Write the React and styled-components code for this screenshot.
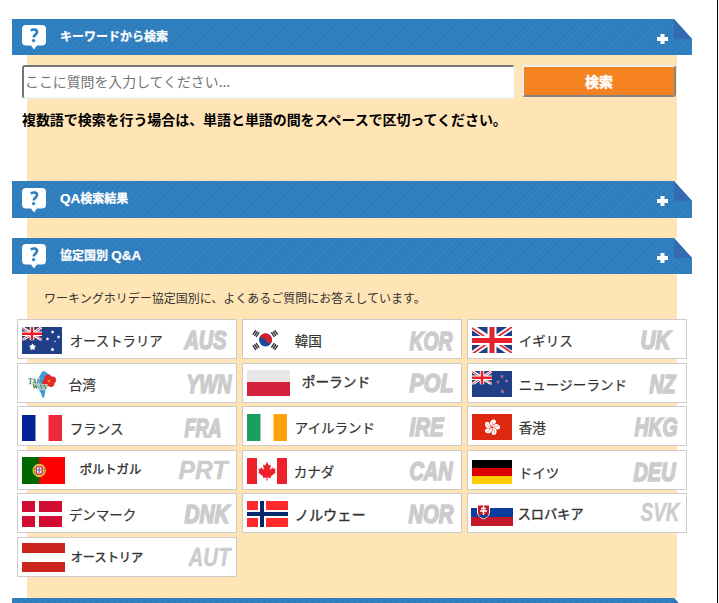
import React from "react";
import styled, { createGlobalStyle } from "styled-components";

const GlobalStyle = createGlobalStyle`
  * { box-sizing: border-box; }
  body {
    margin: 0;
    background: #fff;
    font-family: "Liberation Sans", "Noto Sans CJK JP", sans-serif;
  }
`;

const Page = styled.div`
  width: 718px;
  height: 603px;
  overflow: hidden;
  padding: 19px 0 0 27px;
  border-right: 1px solid #000;
`;

const Panel = styled.main`
  width: 650px;
  background: #ffe4b5;
`;

const Bar = styled.header`
  display: flex;
  align-items: flex-start;
  width: 680px;
  height: ${(p) => p.$height || 36}px;
  margin-left: -15px;
  padding-left: 10px;
  background: repeating-linear-gradient(135deg, #3180c0 0 2.6px, #2b77b7 3.4px, #3180c0 4.24px);
`;

const Bubble = styled.svg`
  flex: none;
  width: 24px;
  height: 25px;
  margin-top: ${(p) => p.$top || 6}px;
`;

const BarTitle = styled.h2`
  flex: 1;
  margin: 8px 0 0 14px;
  color: #fff;
  font-size: 12px;
  line-height: 20px;
  font-weight: 700;
  -webkit-text-stroke: 0.25px #fff;
  white-space: nowrap;
`;

const Latin = styled.span`
  font-size: 13.5px;
  line-height: 1;
`;

const Plus = styled.svg`
  flex: none;
  width: 11px;
  height: 10px;
  margin: 15px 6px 0 0;
`;

const Fold = styled.svg`
  flex: none;
  width: 18px;
  height: 20px;
`;

const SearchSection = styled.section`
  height: 126px;
  margin-left: -5px;
  padding-top: 10px;
`;

const SearchForm = styled.form`
  display: flex;
  align-items: flex-start;
  gap: 7px;
`;

const SearchInput = styled.input`
  width: 493px;
  height: 34px;
  margin: 0;
  padding: 0 0 2px 1px;
  border: 2px solid;
  border-color: #767676 #f0f0f0 #f0f0f0 #767676;
  border-radius: 3px;
  background: #fff;
  font: 13.9px "Noto Sans CJK JP", sans-serif;
  &::placeholder { color: #757575; opacity: 1; }
`;

const SearchButton = styled.button`
  width: 154px;
  height: 32px;
  padding: 0;
  border: 2px solid;
  border-color: #efefef #858585 #858585 #efefef;
  border-radius: 3px;
  background: #f58220;
  color: #fff;
  font: 700 14px/26px "Noto Sans CJK JP", sans-serif;
  -webkit-text-stroke: 0.4px #fff;
`;

const Notice = styled.p`
  margin: 10px 0 0;
  color: #000;
  font-size: 14px;
  line-height: 22px;
  font-weight: 700;
  letter-spacing: -0.07px;
  white-space: nowrap;
`;

const Gap = styled.div`
  height: 20px;
`;

const Countries = styled.section`
  height: 324px;
  padding-top: 15px;
`;

const Intro = styled.p`
  margin: 0 0 10px 17px;
  color: #333;
  font-size: 12px;
  line-height: 20px;
  white-space: nowrap;
`;

const CountryGrid = styled.div`
  display: grid;
  grid-template-columns: repeat(3, 220px);
  grid-auto-rows: 40px;
  gap: 3.6px 5px;
  width: 670px;
  margin-left: -10px;
`;

const Card = styled.a`
  display: flex;
  align-items: flex-start;
  border: 1px solid #ccc;
  background: #fff;
  color: #333;
`;

const Flag = styled.svg`
  flex: none;
  width: ${(p) => p.$w}px;
  height: ${(p) => p.$h}px;
  margin: ${(p) => p.$y}px 0 0 ${(p) => p.$x}px;
`;

const Name = styled.span`
  flex: none;
  margin: ${(p) => p.$y - 1}px 0 0 ${(p) => p.$x + 0.7}px;
  font-family: "Noto Sans CJK JP", sans-serif;
  font-size: ${(p) => p.$size}px;
  font-weight: 400;
  -webkit-text-stroke: ${(p) => (p.$strong ? 0.4 : 0.2)}px #333;
  line-height: 20px;
  white-space: nowrap;
`;

const CodeArt = styled.svg`
  flex: none;
  overflow: visible;
  height: 20px;
  width: ${(p) => p.$w}px;
  margin: ${(p) => p.$y}px ${(p) => p.$right}px 0 auto;
  text {
    font: italic 700 26.5px "Liberation Sans", sans-serif;
    fill: #ccc;
    stroke: #ccc;
    stroke-width: ${(p) => (p.$light ? 0.4 : 1.7)}px;
  }
`;

function UnionJack() {
  return (
    <>
      <path fill="#1f3f87" d="M0 0h40v27H0z" />
      <path stroke="#fff" strokeWidth="5.4" d="M0 0l40 27M40 0L0 27" />
      <path stroke="#e22a35" strokeWidth="1.8" d="M0 1l19 13M40 26L21 13M40 0L21 13M0 27l19-13" />
      <path stroke="#fff" strokeWidth="9" d="M20 0v27M0 13.5h40" />
      <path stroke="#e8202c" strokeWidth="5" d="M20 0v27M0 13.5h40" />
    </>
  );
}

function Canton() {
  return (
    <svg width="20" height="13.5" viewBox="0 0 40 27">
      <UnionJack />
    </svg>
  );
}

function starPoints(cx, cy, r, inner = 0.42, n = 5) {
  return Array.from({ length: n * 2 }, (_, i) => {
    const a = (Math.PI * i) / n - Math.PI / 2;
    const q = i % 2 ? r * inner : r;
    return `${cx + q * Math.cos(a)},${cy + q * Math.sin(a)}`;
  }).join(" ");
}

const Star = ({ x, y, r, inner, ...rest }) => <polygon points={starPoints(x, y, r, inner)} {...rest} />;

const bars = (ys) =>
  ys.map(([x, y, a]) => (
    <g key={`${x}-${y}`} transform={`translate(${x} ${y}) rotate(${a})`} stroke="#333" strokeWidth="1.4">
      <path d="M-2.7-2h5.4M-2.7 0h5.4M-2.7 2h5.4" />
    </g>
  ));

const drawings = {
  AUS: (
    <>
      <path fill="#1f3f87" d="M0 0h40v27H0z" />
      <Canton />
      <g fill="#fff">
        <Star x={10.5} y={20} r={3.6} inner={0.6} />
        <Star x={30.5} y={5} r={1.8} inner={0.6} />
        <Star x={25.5} y={12} r={1.8} inner={0.6} />
        <Star x={36.5} y={10} r={1.8} inner={0.6} />
        <Star x={30.5} y={22.5} r={2} inner={0.6} />
        <circle cx="33" cy="14.5" r=".7" />
      </g>
    </>
  ),
  YWN: (
    <>
      <path fill="#3f9bd8" d="M22 0l6 4-1 5-3 7-1 6-1 5-2-1-1-4-4-6-1-4 3-6 3-5z" />
      <g fill="#e02a2a">
        <circle cx="26" cy="7" r="3.600" />
        <circle cx="30.5" cy="9" r="3.500" />
        <circle cx="29" cy="12.500" r="3.400" />
        <circle cx="24" cy="12" r="3.8" />
      </g>
      <circle cx="27" cy="10" r="1.5" fill="#f58220" />
      <g fill="#176b3a" stroke="#fff" strokeWidth="1" paintOrder="stroke" fontFamily="Liberation Serif, serif" fontWeight="700">
        <text x="6" y="13" fontSize="9" textLength="11" lengthAdjust="spacingAndGlyphs" transform="rotate(4 6 13)">TAI</text>
        <text x="10" y="17.500" fontSize="7.500" textLength="15" lengthAdjust="spacingAndGlyphs" transform="rotate(5 10 18)">WAN</text>
      </g>
    </>
  ),
  FRA: (
    <>
      <path fill="#fff" d="M0 0h40v26H0z" />
      <path fill="#002395" d="M0 0h13.5v26H0z" />
      <path fill="#ed2939" d="M26.5 0H40v26H26.5z" />
    </>
  ),
  KOR: (
    <>
      <circle cx="13.5" cy="10" r="6.5" fill="#174a9c" />
      <path d="M7.4 7.7A6.5 6.5 0 0 1 19.7 12c-1.2 2-4 2-6.2-1.8-2-3-5-3.500-6.100-2.500z" fill="#d5202f" />
      {bars([[4, 3.6, -56], [22.5, 3.6, 56], [4, 16.500, 56], [22.5, 16.500, -56]])}
    </>
  ),
  POL: (
    <>
      <path fill="#e9e8e7" d="M0 0h43v12H0z" />
      <path fill="#d4213d" d="M0 12h43v14H0z" />
    </>
  ),
  IRE: (
    <>
      <path fill="#fff" d="M0 0h40v27H0z" />
      <path fill="#1b9e5f" d="M0 0h13.5v27H0z" />
      <path fill="#ffa20d" d="M26.5 0H40v27H26.5z" />
    </>
  ),
  UK: <UnionJack />,
  NZ: (
    <>
      <path fill="#1f3f87" d="M0 0h40v26H0z" />
      <Canton />
      <g fill="#ee3a47" stroke="#b9a9cc" strokeWidth=".4">
        <Star x={30} y={5.500} r={1.5} />
        <Star x={26} y={11} r={1.5} />
        <Star x={34.500} y={10} r={1.5} />
        <Star x={30.5} y={20.5} r={2} />
      </g>
    </>
  ),
  HKG: (
    <>
      <path fill="#de2910" d="M0 0h40v26H0z" />
      {[0, 72, 144, 216, 288].map((a) => (
        <g key={a} transform={`rotate(${a + 8} 20 13.3)`}>
          <path fill="#fff" d="M20 12.800c-4-2-3-6.500.5-7.500 3-.2 3.500 3 1.500 4.300-1.500 1-2 1.800-2 3.200z" />
          <path stroke="#de2910" strokeWidth=".4" fill="none" d="M20 11c-.8-1.500-.4-3 .5-3.800" />
        </g>
      ))}
    </>
  ),
  PRT: (
    <>
      <path fill="#f00" d="M0 0h43v27H0z" />
      <path fill="#060" d="M0 0h17.2v27H0z" />
      <circle cx="17.2" cy="13.5" r="6.2" fill="#66721a" stroke="#f0d818" strokeWidth="1" />
      <path d="M11 13.500h12.400M13 9l9 9" stroke="#e9d21a" strokeWidth=".7" />
      <path d="M13.200 8.800h8v6.500c0 4.300-8 4.300-8 0z" fill="#e22" stroke="#fff" strokeWidth=".7" />
      <path d="M15 10.500h4.400v4.500c0 2.200-4.400 2.200-4.400 0z" fill="#fff" />
      <path d="M17.200 10.700v5.500M15.300 13h3.800" stroke="#3556b5" strokeWidth="1" />
    </>
  ),
  CAN: (
    <>
      <path fill="#fff" d="M0 0h40v26H0z" />
      <path fill="#ed202b" d="M0 0h10v26H0zM30 0h10v26H30z" />
      <path fill="#ed202b" d="M20 4l1.900 3.500 2-1-.9 5.500 3-2.700.5 1.700 2-.4-.5 3 .7.800-5 4 .4 1.700-3.700-.7.200 3.100h-1.200l.2-3.100-3.700.7.400-1.700-5-4 .7-.8-.5-3 2 .4.500-1.700 3 2.700-.9-5.500 2 1z" />
    </>
  ),
  DEU: (
    <>
      <path d="M0 0h40v8H0z" />
      <path fill="#d00" d="M0 8h40v8H0z" />
      <path fill="#ffce00" d="M0 16h40v8H0z" />
    </>
  ),
  DNK: (
    <>
      <path fill="#d00c33" d="M0 0h40v26H0z" />
      <path stroke="#fff" strokeWidth="4" d="M15 0v26M0 13h40" />
    </>
  ),
  NOR: (
    <>
      <path fill="#ff2a2c" d="M0 0h41v26H0z" />
      <path stroke="#fff" strokeWidth="8" d="M15 0v26M0 13h41" />
      <path stroke="#00286b" strokeWidth="4" d="M15 0v26M0 13h41" />
    </>
  ),
  SVK: (
    <>
      <path fill="#0b3e9c" d="M0 10h42v9H0z" />
      <path fill="#c31829" d="M0 19h42v9H0z" />
      <path d="M6.500 7h12v7c0 4-3.500 6-6 7-2.500-1-6-3-6-7z" fill="#c31829" stroke="#fff" strokeWidth="1" />
      <path d="M8 18c1-2 2-1.500 2.500-.8 1-2 3-2 4 0 .6-.8 1.600-1.200 2.500.8l-4.500 2.500z" fill="#0b3e9c" />
      <path d="M12.500 8v9M10 10.500h5M9 13h7" stroke="#fff" strokeWidth="1.500" />
    </>
  ),
  AUT: (
    <>
      <path fill="#fff" d="M0 0h43v29H0z" />
      <path fill="#ca261d" d="M0 0h43v10H0zM0 19h43v10H0z" />
    </>
  ),
};

/* flag: x, y, width, height; name: gap after flag, y, size; art: width, y, right gap */
const countries = [
  { code: "AUS", name: "オーストラリア", flag: [4, 7, 40, 27], label: [7, 11, 13.4], art: [43, 10, 9] },
  { code: "KOR", name: "韓国", flag: [9, 10, 27, 20], label: [15, 11.4, 13.6], art: [44, 11, 8] },
  { code: "UK", name: "イギリス", flag: [4, 7, 40, 26], label: [6, 11, 13.5], art: [31, 10, 15] },
  { code: "YWN", name: "台湾", flag: [4, 7, 40, 27], label: [6, 11, 13.6], art: [46, 10, 4] },
  { code: "POL", name: "ポーランド", flag: [4, 6, 43, 26], label: [11, 8, 13.7], strong: true, art: [45, 9, 7] },
  { code: "NZ", name: "ニュージーランド", flag: [4, 7, 40, 26], label: [6, 11, 13.6], art: [27, 10, 10] },
  { code: "FRA", name: "フランス", flag: [4, 8, 40, 26], label: [7, 12, 13.5], art: [38, 11, 14] },
  { code: "IRE", name: "アイルランド", flag: [4, 7, 40, 27], label: [7, 11, 13.5], art: [35, 10, 17] },
  { code: "HKG", name: "香港", flag: [4, 7, 40, 26], label: [6, 11, 13.6], art: [44, 10, 8] },
  { code: "PRT", name: "ポルトガル", flag: [4, 6, 43, 27], label: [14, 9, 12.3], strong: true, art: [50, 9, 8], light: true },
  { code: "CAN", name: "カナダ", flag: [4, 7, 40, 26], label: [6, 11, 13.6], art: [44, 10, 8] },
  { code: "DEU", name: "ドイツ", flag: [4, 9, 40, 24], label: [6, 12, 13.5], art: [43, 11, 10] },
  { code: "DNK", name: "デンマーク", flag: [4, 7, 40, 26], label: [6, 11, 13.5], art: [46, 10, 6] },
  { code: "NOR", name: "ノルウェー", flag: [4, 7, 41, 26], label: [6, 11, 14.2], strong: true, art: [46, 10, 7] },
  { code: "SVK", name: "スロバキア", flag: [3, 4, 42, 28], label: [4, 11, 13.2], strong: true, art: [40, 8, 6], light: true },
  { code: "AUT", name: "オーストリア", flag: [4, 5, 43, 29], label: [5, 10, 12.2], strong: true, art: [43, 9.5, 5], light: true },
];

function SectionBar({ children, height, bubbleTop }) {
  return (
    <Bar $height={height}>
      <Bubble $top={bubbleTop} viewBox="0 0 24 25">
        <path fill="#fff" d="M4 0h16q4 0 4 4v12.500q0 4-4 4h-5l-3 4-3-4H4q-4 0-4-4V4q0-4 4-4z" />
        <path d="M8.800 5.500c3-1.800 6.200-1 6.200 1.600 0 2.600-3.200 2.500-3.200 5.400" fill="none" stroke="#3180c0" strokeWidth="2.700" />
        <circle cx="11.600" cy="15.600" r="1.700" fill="#3180c0" />
      </Bubble>
      <BarTitle>{children}</BarTitle>
      <Plus viewBox="0 0 11 10">
        <path stroke="#fff" strokeWidth="4" d="M5.500 0v10M0 5h11" />
      </Plus>
      <Fold viewBox="0 0 18 20">
        <path fill="#fff" d="M0 0h18v20z" />
        <path fill="#336ab0" d="M0 0v20h18z" />
      </Fold>
    </Bar>
  );
}

function Country({ item }) {
  const [fx, fy, fw, fh] = item.flag;
  const [nx, ny, size] = item.label;
  const [cw, cy, right] = item.art;
  return (
    <Card>
      <Flag $x={fx} $y={fy} $w={fw} $h={fh} viewBox={`0 0 ${fw} ${fh}`}>
        {drawings[item.code]}
      </Flag>
      <Name $x={nx} $y={ny} $size={size} $strong={item.strong}>{item.name}</Name>
      <CodeArt $w={cw} $y={cy} $right={right} $light={item.light}>
        <text x="0.5" y="19.2" textLength={cw - 1} lengthAdjust="spacingAndGlyphs">{item.code}</text>
      </CodeArt>
    </Card>
  );
}

export default function App() {
  return (
    <>
      <GlobalStyle />
      <Page>
        <Panel>
          <SectionBar>キーワードから検索</SectionBar>
          <SearchSection>
            <SearchForm>
              <SearchInput placeholder="ここに質問を入力してください..." />
              <SearchButton type="button">検索</SearchButton>
            </SearchForm>
            <Notice>複数語で検索を行う場合は、単語と単語の間をスペースで区切ってください。</Notice>
          </SearchSection>
          <SectionBar height={37} bubbleTop={7}><Latin>QA</Latin>検索結果</SectionBar>
          <Gap />
          <SectionBar>協定国別 <Latin>Q&amp;A</Latin></SectionBar>
          <Countries>
            <Intro>ワーキングホリデー協定国別に、よくあるご質問にお答えしています。</Intro>
            <CountryGrid>
              {countries.map((item) => <Country key={item.code} item={item} />)}
            </CountryGrid>
          </Countries>
          <SectionBar />
        </Panel>
      </Page>
    </>
  );
}
